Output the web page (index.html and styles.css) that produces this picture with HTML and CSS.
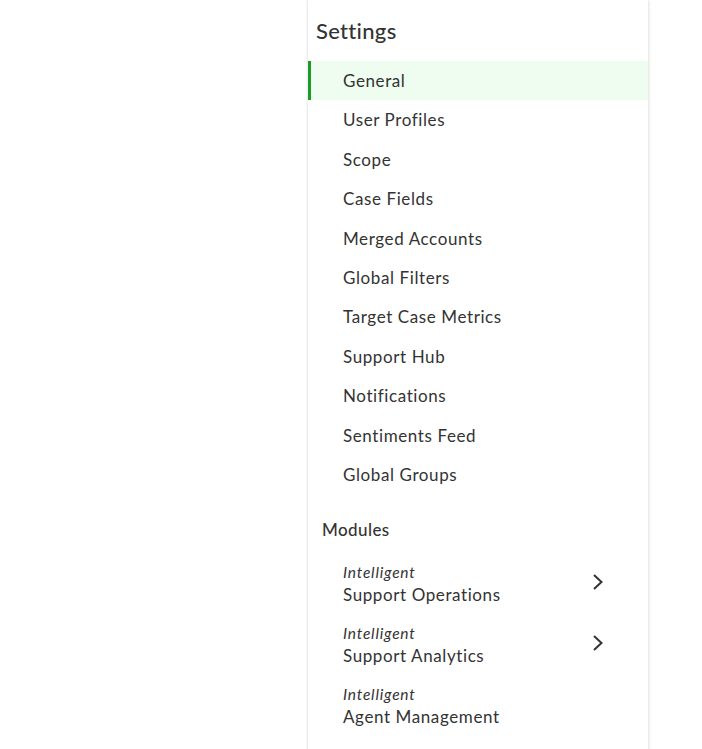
FILE: index.html
```html
<!DOCTYPE html>
<html>
<head>
<meta charset="utf-8">
<link rel="stylesheet" href="styles.css">
</head>
<body>
<div class="page">
  <nav class="panel">
    <h1 class="title">Settings</h1>
    <ul class="list">
      <li class="item active">General</li>
      <li class="item">User Profiles</li>
      <li class="item">Scope</li>
      <li class="item">Case Fields</li>
      <li class="item">Merged Accounts</li>
      <li class="item">Global Filters</li>
      <li class="item">Target Case Metrics</li>
      <li class="item">Support Hub</li>
      <li class="item">Notifications</li>
      <li class="item">Sentiments Feed</li>
      <li class="item">Global Groups</li>
    </ul>
    <h2 class="section">Modules</h2>
    <ul class="modules">
      <li class="module">
        <div class="mod-text"><span class="pre">Intelligent</span><span class="name">Support Operations</span></div>
        <svg class="chev" width="12" height="18" viewBox="0 0 12 18"><path d="M2 2 L9.5 9 L2 16" fill="none" stroke="#333" stroke-width="2"/></svg>
      </li>
      <li class="module">
        <div class="mod-text"><span class="pre">Intelligent</span><span class="name">Support Analytics</span></div>
        <svg class="chev" width="12" height="18" viewBox="0 0 12 18"><path d="M2 2 L9.5 9 L2 16" fill="none" stroke="#333" stroke-width="2"/></svg>
      </li>
      <li class="module">
        <div class="mod-text"><span class="pre">Intelligent</span><span class="name">Agent Management</span></div>
      </li>
    </ul>
  </nav>
</div>
</body>
</html>
```
FILE: styles.css
```css
html, body {
  margin: 0;
  padding: 0;
  background: #fff;
}
body {
  font-family: Lato, "Noto Sans", sans-serif;
  color: #333;
}
.page {
  display: flex;
  height: 749px;
  overflow: hidden;
}
.panel {
  margin-left: 308px;
  width: 340px;
  height: 800px;
  background: #fff;
  box-shadow: -1px 0 2px rgba(0,0,0,0.08), 1px 0 3px rgba(0,0,0,0.12);
}
.title {
  margin: 0;
  padding: 18px 0 0 8px;
  height: 61px;
  box-sizing: border-box;
  font-size: 22px;
  line-height: 26px;
  font-weight: 500;
  letter-spacing: 0.3px;
  color: #333;
}
.list, .modules {
  list-style: none;
  margin: 0;
  padding: 0;
}
.item {
  height: 39.4px;
  line-height: 39.4px;
  padding-left: 35px;
  font-size: 17px;
  letter-spacing: 0.6px;
  color: #333;
}
.item.active {
  background: #effcf0;
  box-shadow: inset 3px 0 0 #1c9b28;
}
.section {
  margin: 0;
  padding: 24px 0 0 14px;
  height: 60px;
  box-sizing: border-box;
  font-size: 17px;
  line-height: 24px;
  font-weight: 500;
  letter-spacing: 0.4px;
  color: #333;
}
.module {
  display: flex;
  align-items: center;
  justify-content: space-between;
  height: 61px;
  padding: 0 44px 0 35px;
}
.mod-text {
  display: flex;
  flex-direction: column;
  margin-top: -1px;
}
.pre {
  font-style: italic;
  font-size: 15.5px;
  line-height: 22px;
  letter-spacing: 0.8px;
}
.name {
  font-size: 17px;
  line-height: 24px;
  letter-spacing: 0.6px;
}
.chev {
  display: block;
  margin-bottom: 6px;
}
```
